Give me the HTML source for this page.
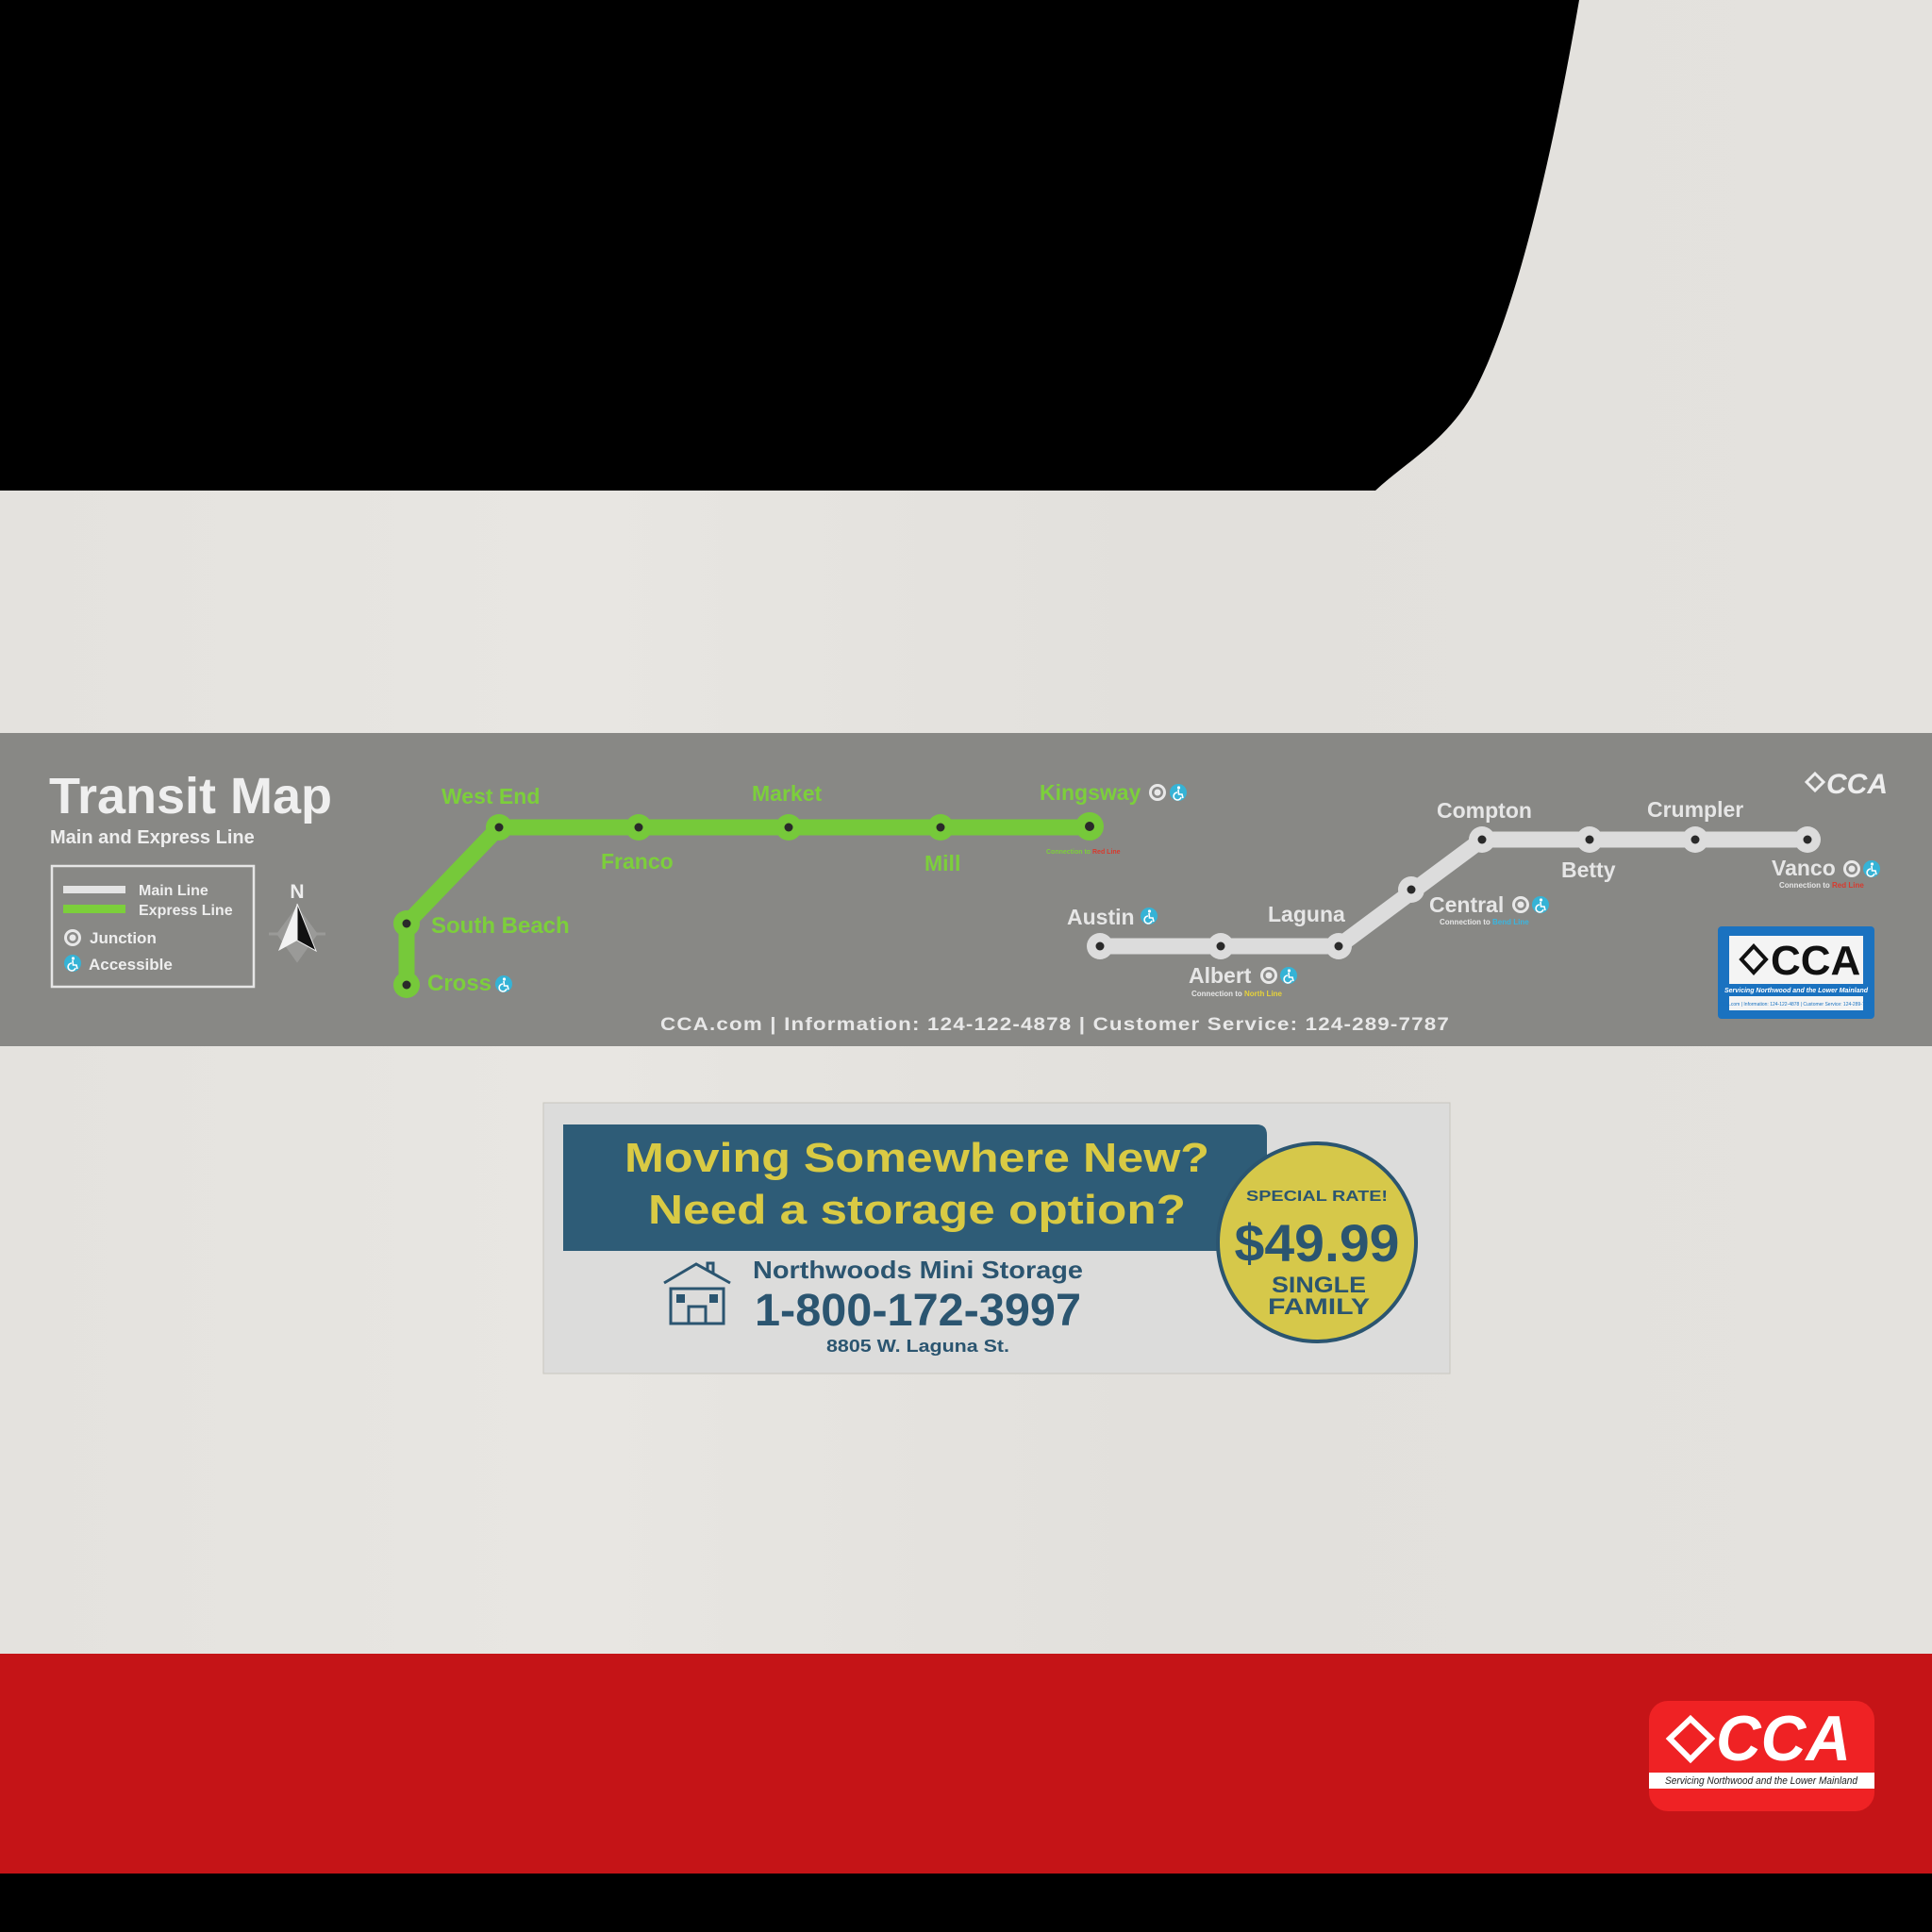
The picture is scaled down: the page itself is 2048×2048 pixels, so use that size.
<!DOCTYPE html>
<html><head><meta charset="utf-8"><style>
html,body{margin:0;padding:0;background:#e5e3df;}
svg{display:block}
text{font-family:"Liberation Sans",Arial,sans-serif;}
</style></head><body>
<svg width="2048" height="2048" viewBox="0 0 2048 2048" xmlns="http://www.w3.org/2000/svg">
<defs>
<linearGradient id="paper" x1="0" x2="1" y1="0" y2="0">
<stop offset="0" stop-color="#e4e2de"/><stop offset="0.3" stop-color="#e8e6e2"/><stop offset="0.6" stop-color="#e2e0dc"/><stop offset="1" stop-color="#e4e2de"/>
</linearGradient>
<g id="junc"><circle r="9" fill="#e8e8e8"/><circle r="6" fill="#8a8a88"/><circle r="3.5" fill="#e8e8e8"/></g>
<g id="acc"><circle r="9" fill="#35b3d6"/><circle cx="0.5" cy="-5" r="1.6" fill="#fff"/><path d="M0,-3 L0.5,2 L4,2 L5,6 M-1,0 A4,4 0 1 0 3,5" stroke="#fff" stroke-width="1.6" fill="none"/></g>
</defs>
<rect width="2048" height="2048" fill="url(#paper)"/>
<path d="M0,0 L1674,0 C1650,140 1610,330 1560,420 C1530,470 1490,490 1458,520 L0,520 Z" fill="#000"/>
<rect x="0" y="777" width="2048" height="332" fill="#8b8b89"/>
<rect x="0" y="777" width="2048" height="332" fill="#7f7f7d" opacity="0.25"/>
<text x="52" y="862" font-size="54" font-weight="bold" fill="#efefef" textLength="300" lengthAdjust="spacingAndGlyphs">Transit Map</text>
<text x="53" y="894" font-size="20" font-weight="bold" fill="#eeeeee">Main and Express Line</text>
<rect x="55" y="918" width="214" height="128" fill="none" stroke="#e6e6e6" stroke-width="2.5"/>
<rect x="67" y="939" width="66" height="8" fill="#e4e4e4"/>
<rect x="67" y="959" width="66" height="9" fill="#7ccf3b"/>
<text x="147" y="949" font-size="16" font-weight="bold" fill="#eee">Main Line</text>
<text x="147" y="970" font-size="16" font-weight="bold" fill="#eee">Express Line</text>
<use href="#junc" x="77" y="994"/>
<text x="95" y="1000" font-size="17" font-weight="bold" fill="#eee">Junction</text>
<use href="#acc" x="77" y="1021"/>
<text x="94" y="1028" font-size="17" font-weight="bold" fill="#eee">Accessible</text>
<text x="315" y="952" font-size="21" font-weight="bold" fill="#eee" text-anchor="middle">N</text>
<path d="M315,963 L335,990 L315,1018 L295,990 Z M285,990 L345,990" fill="#9a9a98" stroke="#9a9a98" stroke-width="3"/>
<path d="M315,958 L295,1008 L315,997 Z" fill="#f2f2f2"/>
<path d="M315,958 L335,1008 L315,997 Z" fill="#111" stroke="#eee" stroke-width="1"/>
<path d="M431,1044 L431,979 L529,877 L1155,877" stroke="#76c93a" stroke-width="17" fill="none" stroke-linejoin="round"/>
<g fill="#76c93a">
<circle cx="431" cy="1044" r="14"/><circle cx="431" cy="979" r="14"/><circle cx="529" cy="877" r="14"/><circle cx="677" cy="877" r="14"/><circle cx="836" cy="877" r="14"/><circle cx="997" cy="877" r="14"/><circle cx="1155" cy="876" r="15"/>
</g>
<g fill="#2a2a2a">
<circle cx="431" cy="1044" r="4.5"/><circle cx="431" cy="979" r="4.5"/><circle cx="529" cy="877" r="4.5"/><circle cx="677" cy="877" r="4.5"/><circle cx="836" cy="877" r="4.5"/><circle cx="997" cy="877" r="4.5"/><circle cx="1155" cy="876" r="5"/>
</g>
<g fill="#7ccf3b" font-size="23" font-weight="bold">
<text x="468" y="852">West End</text>
<text x="797" y="849">Market</text>
<text x="637" y="921">Franco</text>
<text x="980" y="923">Mill</text>
<text x="457" y="989" font-size="24">South Beach</text>
<text x="453" y="1050" font-size="24">Cross</text>
<text x="1102" y="848" font-size="23">Kingsway</text>
</g>
<use href="#acc" x="534" y="1043"/>
<use href="#junc" x="1227" y="840"/><use href="#acc" x="1249" y="840"/>
<text x="1109" y="905" font-size="7" font-weight="bold" fill="#7ccf3b">Connection to <tspan fill="#d83a2e">Red Line</tspan></text>
<path d="M1166,1003 L1419,1003 L1571,890 L1916,890" stroke="#dcdcdc" stroke-width="17" fill="none" stroke-linejoin="round"/>
<g fill="#dcdcdc">
<circle cx="1166" cy="1003" r="14"/><circle cx="1294" cy="1003" r="14"/><circle cx="1419" cy="1003" r="14"/><circle cx="1496" cy="943" r="14"/><circle cx="1571" cy="890" r="14"/><circle cx="1685" cy="890" r="14"/><circle cx="1797" cy="890" r="14"/><circle cx="1916" cy="890" r="14"/>
</g>
<g fill="#2a2a2a">
<circle cx="1166" cy="1003" r="4.5"/><circle cx="1294" cy="1003" r="4.5"/><circle cx="1419" cy="1003" r="4.5"/><circle cx="1496" cy="943" r="4.5"/><circle cx="1571" cy="890" r="4.5"/><circle cx="1685" cy="890" r="4.5"/><circle cx="1797" cy="890" r="4.5"/><circle cx="1916" cy="890" r="4.5"/>
</g>
<g fill="#e6e6e6" font-size="23" font-weight="bold">
<text x="1131" y="980">Austin</text>
<text x="1344" y="977">Laguna</text>
<text x="1260" y="1042">Albert</text>
<text x="1515" y="967">Central</text>
<text x="1523" y="867">Compton</text>
<text x="1655" y="930">Betty</text>
<text x="1746" y="866">Crumpler</text>
<text x="1878" y="928">Vanco</text>
</g>
<use href="#acc" x="1218" y="971"/>
<use href="#junc" x="1345" y="1034"/><use href="#acc" x="1366" y="1034"/>
<use href="#junc" x="1612" y="959"/><use href="#acc" x="1633" y="959"/>
<use href="#junc" x="1963" y="921"/><use href="#acc" x="1984" y="921"/>
<text x="1263" y="1056" font-size="8" font-weight="bold" fill="#e6e6e6">Connection to <tspan fill="#e6d23a">North Line</tspan></text>
<text x="1526" y="980" font-size="8" font-weight="bold" fill="#e6e6e6">Connection to <tspan fill="#3ab6e0">Bend Line</tspan></text>
<text x="1886" y="941" font-size="8" font-weight="bold" fill="#e6e6e6">Connection to <tspan fill="#d83a2e">Red Line</tspan></text>
<path d="M1924,820 L1933,829 L1924,838 L1915,829 Z" fill="none" stroke="#eee" stroke-width="3"/>
<text x="1936" y="841" font-size="30" font-weight="bold" font-style="italic" fill="#eee">CCA</text>
<rect x="1821" y="982" width="166" height="98" rx="4" fill="#1a72c0"/>
<rect x="1833" y="992" width="142" height="51" fill="#f4f4f4"/>
<path d="M1859,1003 L1872,1017 L1859,1031 L1846,1017 Z" fill="none" stroke="#111" stroke-width="4"/>
<text x="1877" y="1033" font-size="44" font-weight="bold" fill="#111">CCA</text>
<text x="1904" y="1052" font-size="7" font-style="italic" font-weight="bold" fill="#fff" text-anchor="middle">Servicing Northwood and the Lower Mainland</text>
<rect x="1833" y="1056" width="142" height="15" fill="#f4f4f4"/>
<text x="1904" y="1066" font-size="5" fill="#1a72c0" text-anchor="middle">CCA.com | Information: 124-122-4878 | Customer Service: 124-289-7787</text>
<text x="700" y="1092" font-size="19" font-weight="bold" fill="#e8e8e8" textLength="837" lengthAdjust="spacingAndGlyphs" letter-spacing="1">CCA.com  |   Information: 124-122-4878   | Customer Service: 124-289-7787</text>
<rect x="576" y="1169" width="961" height="287" fill="#dcdcdb"/>
<rect x="576" y="1169" width="961" height="287" fill="none" stroke="#c9c6bf" stroke-width="1"/>
<path d="M597,1192 L1332,1192 Q1343,1192 1343,1203 L1343,1326 L597,1326 Z" fill="#2e5c77"/>
<g font-weight="bold" fill="#d9ca44" text-anchor="middle" font-size="44">
<text x="972" y="1242" textLength="620" lengthAdjust="spacingAndGlyphs">Moving Somewhere New?</text>
<text x="972" y="1297" textLength="570" lengthAdjust="spacingAndGlyphs">Need a storage option?</text>
</g>
<circle cx="1396" cy="1317" r="105" fill="#d6c84a" stroke="#2b5570" stroke-width="4"/>
<g fill="#2b5570" font-weight="bold" text-anchor="middle">
<text x="1396" y="1273" font-size="16" textLength="150" lengthAdjust="spacingAndGlyphs">SPECIAL RATE!</text>
<text x="1396" y="1337" font-size="56" textLength="175" lengthAdjust="spacingAndGlyphs">$49.99</text>
<text x="1398" y="1370" font-size="24" textLength="100" lengthAdjust="spacingAndGlyphs">SINGLE</text>
<text x="1398" y="1393" font-size="24" textLength="108" lengthAdjust="spacingAndGlyphs">FAMILY</text>
</g>
<g fill="#2b5570" font-weight="bold">
<text x="798" y="1355" font-size="26" textLength="350" lengthAdjust="spacingAndGlyphs">Northwoods Mini Storage</text>
<text x="800" y="1405" font-size="48" textLength="346" lengthAdjust="spacingAndGlyphs">1-800-172-3997</text>
<text x="876" y="1433" font-size="18" textLength="194" lengthAdjust="spacingAndGlyphs">8805 W. Laguna St.</text>
</g>
<g fill="none" stroke="#2b5570" stroke-width="3">
<path d="M704,1360 L738,1340 L774,1360 M750,1347 L750,1339 L756,1339 L756,1351"/>
<rect x="711" y="1366" width="56" height="37"/>
<path d="M730,1403 L730,1385 L748,1385 L748,1403"/>
</g>
<rect x="717" y="1372" width="9" height="9" fill="#2b5570"/><rect x="752" y="1372" width="9" height="9" fill="#2b5570"/>
<rect x="0" y="1753" width="2048" height="233" fill="#c51417"/>
<rect x="0" y="1986" width="2048" height="62" fill="#000"/>
<rect x="1748" y="1803" width="239" height="117" rx="20" fill="#ef2224"/>
<rect x="1748" y="1879" width="239" height="17" fill="#fff"/>
<path d="M1792,1822 L1814,1843 L1792,1865 L1770,1843 Z" fill="none" stroke="#fff" stroke-width="6"/>
<text x="1819" y="1866" font-size="68" font-weight="bold" font-style="italic" fill="#fff" textLength="143" lengthAdjust="spacingAndGlyphs">CCA</text>
<text x="1867" y="1891" font-size="11" font-style="italic" fill="#222" text-anchor="middle" textLength="204" lengthAdjust="spacingAndGlyphs">Servicing Northwood and the Lower Mainland</text>
</svg>
</body></html>
